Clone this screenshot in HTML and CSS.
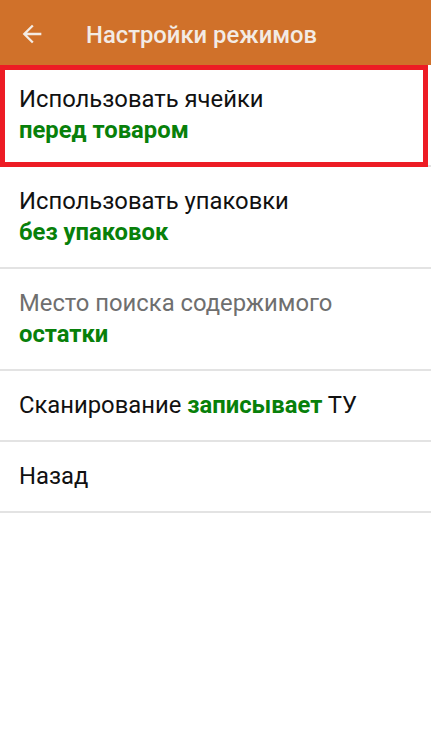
FILE: index.html
```html
<!DOCTYPE html>
<html lang="ru">
<head>
<meta charset="utf-8">
<title>Настройки режимов</title>
<link rel="stylesheet" href="styles.css">
</head>
<body>
<div class="screen">
  <header class="appbar">
    <svg class="back" viewBox="0 0 24 24" width="28" height="28"><path d="M20 11H7.83l5.59-5.59L12 4l-8 8 8 8 1.41-1.41L7.83 13H20v-2z" fill="currentColor"/></svg>
    <h1 class="title">Настройки режимов</h1>
  </header>
  <ul class="list">
    <li class="item item-selected">
      <div class="label">Использовать ячейки</div>
      <div class="value">перед товаром</div>
      <div class="highlight"></div>
    </li>
    <li class="item">
      <div class="label">Использовать упаковки</div>
      <div class="value">без упаковок</div>
    </li>
    <li class="item">
      <div class="label muted">Место поиска содержимого</div>
      <div class="value">остатки</div>
    </li>
    <li class="item">
      <div class="label">Сканирование <span class="value-inline">записывает</span> ТУ</div>
    </li>
    <li class="item">
      <div class="label">Назад</div>
    </li>
  </ul>
</div>
</body>
</html>
```
FILE: styles.css
```css
* { box-sizing: border-box; }
html, body { margin: 0; padding: 0; background: #ffffff; }
body { font-family: Roboto, "Noto Sans", sans-serif; }
.screen { width: 431px; min-height: 739px; background: #fff; }
.appbar {
  height: 65px;
  background: #d0712a;
  display: flex;
  align-items: center;
  padding-left: 18px;
  color: #f3ebe4;
}
.back { display: block; margin-top: 2px; }
.title {
  margin: 5px 0 0 40px;
  font-size: 23.8px;
  font-weight: 500;
  color: #f3ebe4;
}
.list { list-style: none; margin: 0; padding: 0; }
.item {
  position: relative;
  padding: 19px 19px 19px;
  border-bottom: 2px solid #e3e3e3;
  font-size: 23.8px;
  line-height: 31px;
  color: #111;
}
.label.muted { color: #6f6f6f; }
.value, .value-inline { color: #08800a; font-weight: 700; }
.highlight {
  position: absolute;
  left: 0; top: 0;
  right: 3px; bottom: -2px;
  border: 5px solid #ed1c24;
  pointer-events: none;
}
```
